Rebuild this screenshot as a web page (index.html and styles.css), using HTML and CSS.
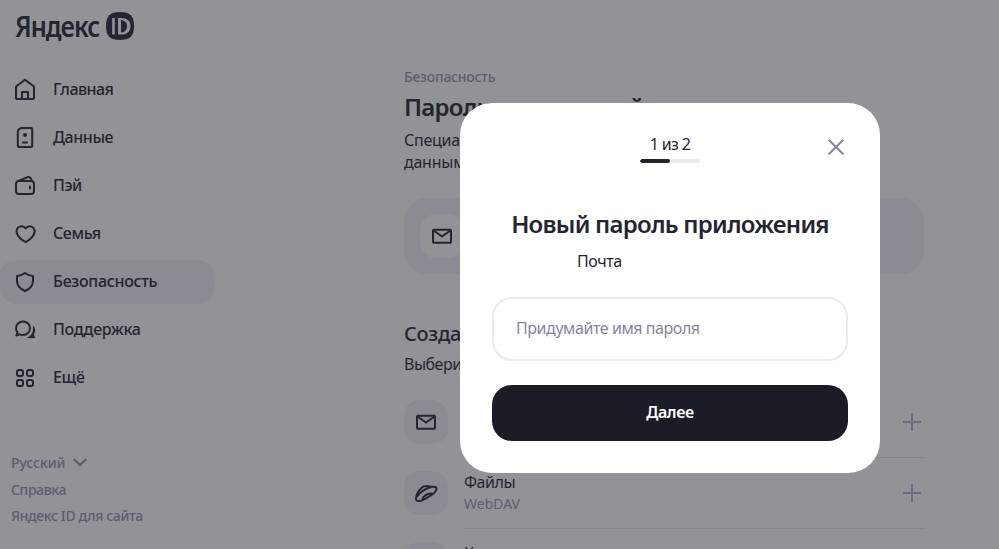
FILE: index.html
```html
<!DOCTYPE html>
<html lang="ru">
<head>
<meta charset="utf-8">
<title>Яндекс ID</title>
<link rel="stylesheet" href="styles.css">
</head>
<body>
<div class="page">
  <aside class="sidebar">
    <div class="logo"><span class="logo-text">Яндекс</span>
      <svg class="logo-id" width="28" height="28" viewBox="0 0 28 28"><path d="M14 0C24 0 28 4 28 14S24 28 14 28 0 24 0 14 4 0 14 0Z" fill="#252531"/><path d="M7.500 6V22.500" stroke="#929397" stroke-width="2.600"/><path d="M12 6h3.500c5.500 0 9 3 9 8.200s-3.500 8.300-9 8.300H12Z" fill="#929397"/><path d="M15 8c4 .4 6 2.600 6 6.200s-2 5.900-6 6.300Z" fill="#252531"/></svg>
    </div>
    <nav class="nav">
      <a class="item"><svg class="icon" viewBox="0 0 24 24"><path d="M3 9.500 12 2.700l9 6.800V21a1 1 0 0 1-1 1H4a1 1 0 0 1-1-1Z M9 22v-7h6v7"/></svg><span class="t-home">Главная</span></a>
      <a class="item"><svg class="icon" viewBox="0 0 24 24"><path d="M9 3h9a1.200 1.200 0 0 1 1.200 1.200v16.600A1.200 1.200 0 0 1 18 22H6a1.200 1.200 0 0 1-1.200-1.200V7Q5 3.300 9 3Z M10 17.500h4"/><circle cx="12" cy="10" r="2" class="solid"/></svg><span class="t-data">Данные</span></a>
      <a class="item"><svg class="icon" viewBox="0 0 24 24"><path d="M6 8h12a3 3 0 0 1 3 3v7a3 3 0 0 1-3 3H6a3 3 0 0 1-3-3v-7a3 3 0 0 1 3-3ZM4.300 8.400 14.500 4.300q2-.8 3.300 1l1.300 2.900M17 13.500v2"/></svg><span class="t-pay">Пэй</span></a>
      <a class="item"><svg class="icon" viewBox="0 -1.300 24 24"><path d="M12.600 6C10.500 3.200 7 3.300 5.100 5.300 3 7.500 3.300 11 5.500 14c1.700 2.300 4.400 4.300 7.100 5.800 2.700-1.500 5.400-3.500 7.100-5.800 2.200-3 2.500-6.500.4-8.700-1.900-2-5.400-2.100-7.500.7Z"/></svg><span class="t-family">Семья</span></a>
      <a class="item active"><svg class="icon" viewBox="0 -1 24 24"><path d="M12 3C9.800 4.700 7 5.700 4 6v4.500c0 5 3.200 8.700 8 10.500 4.800-1.800 8-5.500 8-10.500V6c-3-.3-5.800-1.300-8-3Z"/></svg><span class="t-security">Безопасность</span></a>
      <a class="item"><svg class="icon" viewBox="0 0 24 24"><path d="M10 4.500c4.100 0 7 2.900 7 6.700S14.100 18 10 18c-1.200 0-2.300-.2-3.300-.7L3.300 18.500l1.200-3.100A6.800 6.800 0 0 1 3 11.200c0-3.800 2.900-6.700 7-6.700Z"/><path d="M20 8.500c2.600 2.500 2.800 6.100.9 8.800l1.300 3.800c-3 .1-6.200.2-8.700-.6 4-.8 7.200-3.900 6.500-12Z" class="solid"/></svg><span class="t-support">Поддержка</span></a>
      <a class="item"><svg class="icon" viewBox="0 -1 24 24"><rect x="4" y="4" width="6" height="6" rx="2"/><rect x="14" y="4" width="6" height="6" rx="2"/><rect x="4" y="14" width="6" height="6" rx="2"/><rect x="14" y="14" width="6" height="6" rx="2"/></svg><span class="t-more">Ещё</span></a>
    </nav>
    <footer class="links">
      <a class="lang"><span class="t-lang">Русский</span><svg width="14" height="9" viewBox="0 0 14 9" fill="none" stroke="#5d5c70" stroke-width="2"><path d="m.8 1 6.200 6.300L13.200 1"/></svg></a>
      <a class="t-help">Справка</a>
      <a class="t-site">Яндекс ID для сайта</a>
    </footer>
  </aside>
  <main class="main">
    <div class="crumb">Безопасность</div>
    <h1>Пароли приложений</h1>
    <p class="intro">Специал<br>данным</p>
    <div class="banner"><div class="tile plain"><svg class="icon" viewBox="0 0 24 24"><rect x="3" y="5.700" width="18" height="13" rx="1"/><path d="m3.500 6.500 8.500 6 8.500-6"/></svg></div></div>
    <h2>Создать</h2>
    <p class="choose">Выберите</p>
    <div class="row"><div class="tile"><svg class="icon" viewBox="0 0 24 24"><rect x="3" y="5.700" width="18" height="13" rx="1"/><path d="m3.500 6.500 8.500 6 8.500-6"/></svg></div><div class="content"><div></div><svg class="plus" viewBox="0 0 18 18"><path d="M9 0v18M0 9h18"/></svg></div></div>
    <div class="row"><div class="tile"><svg class="icon" viewBox="0 0 24 24"><path d="M2.500 19.500C.8 17 4 9.500 8 6.500c2-1.500 4.500-1.800 7.500-1 3 .8 6.500-.3 7 1.500.6 3.300-5 7.500-10.500 10.300-3.500 1.900-7.700 3.700-9.500 2.200ZM3.500 15C6 11 11.500 7.800 17 6M9 18.500c-1-1 1-3.500 4-5 2.800-1.400 5.500-1.500 5-.2"/></svg></div><div class="content"><div><div class="name">Файлы</div><div class="sub">WebDAV</div></div><svg class="plus" viewBox="0 0 18 18"><path d="M9 0v18M0 9h18"/></svg></div></div>
    <div class="row"><div class="tile"></div><div class="content"><div class="name">К</div></div></div>
  </main>
</div>
<section class="modal" role="dialog">
  <header class="modal-head"><div class="step"><span class="step-text">1 из 2</span><div class="progress"><div class="done"></div></div></div>
    <svg class="close" viewBox="0 0 16 16"><path d="m.7.7 14.600 14.600M15.300.7.7 15.300"/></svg></header>
  <div class="modal-title"><span class="t-title">Новый пароль приложения</span></div>
  <div class="mail">Почта</div>
  <div class="input"><span>Придумайте имя пароля</span></div>
  <div class="button"><span>Далее</span></div>
</section>
</body>
</html>
```
FILE: styles.css
```css
* { box-sizing: border-box; }
body { margin: 0; height: 549px; overflow: hidden; background: #929397; color: #252531; font: 16px/20px "Noto Sans", "Open Sans", sans-serif; }
h1, h2, p { margin: 0; }
.page { display: flex; height: 549px; overflow: hidden; }
.sidebar { width: 214px; flex: none; }
.logo { display: flex; align-items: center; gap: 6px; height: 52px; padding-left: 15px; }
.logo-text { width: 85px; font-size: 29px; line-height: 30px; font-weight: 600; letter-spacing: -1.2px; white-space: nowrap; transform: scaleX(.87); transform-origin: left; }
.logo-id { flex: none; }
.nav { display: flex; flex-direction: column; gap: 4px; padding-top: 16px; }
.item { display: flex; align-items: center; gap: 16px; height: 44px; padding: 0 0 2px 13px; font-weight: 500; border-radius: 0 16px 16px 0; white-space: nowrap; }
.active { background: #8b8b94; border-radius: 16px; }
.icon { width: 24px; height: 24px; flex: none; fill: none; stroke: #252531; stroke-width: 2; stroke-linejoin: round; stroke-linecap: round; }
.icon .solid { fill: #252531; stroke: none; }
.t-home { letter-spacing: -.55px; }
.t-data, .t-pay, .t-family { letter-spacing: -.4px; }
.t-security, .t-support, .t-more { letter-spacing: -.3px; }
.links { display: flex; flex-direction: column; gap: 6px; padding: 52px 0 0 11px; color: #5d5c70; font-size: 14px; font-weight: 500; white-space: nowrap; }
.lang { display: flex; align-items: center; gap: 8px; height: 22px; padding-bottom: 1px; }
.t-lang { letter-spacing: -.1px; }
.t-help, .t-site { letter-spacing: -.38px; }
.main { width: 520px; margin-left: 190px; padding-top: 67px; white-space: nowrap; }
.crumb { color: #5d5c70; font-size: 14px; font-weight: 500; letter-spacing: -.25px; }
h1 { margin-top: 5px; font-size: 24px; line-height: 30px; font-weight: 600; letter-spacing: -.75px; }
.intro { margin-top: 7px; line-height: 22px; letter-spacing: -.25px; }
.banner { height: 76px; margin-top: 25px; padding: 16px; border-radius: 24px; background: #8b8b94; }
.tile { display: flex; align-items: center; justify-content: center; width: 44px; height: 44px; flex: none; border-radius: 16px; background: #8b8b94; }
.plain { background: #929397; }
h2 { margin-top: 48px; font-size: 20px; line-height: 24px; font-weight: 500; letter-spacing: -.3px; }
.choose { margin-top: 8px; letter-spacing: -.5px; }
.row { display: flex; gap: 16px; height: 71px; }
.choose + .row { margin-top: 26px; }
.content { display: flex; flex: 1; height: 58px; align-items: flex-start; justify-content: space-between; border-bottom: 1px solid #858590; }
.name { line-height: 22px; letter-spacing: -.45px; }
.sub { color: #5d5c70; font-size: 14px; line-height: 22px; }
.plus { width: 18px; height: 18px; margin: 13px 3px 0 0; fill: none; stroke: #6b6c82; stroke-width: 2; }
.modal { position: absolute; left: 460px; top: 103px; width: 420px; height: 370px; padding: 31px 32px 32px; border-radius: 32px; background: #fff; text-align: center; }
.modal-head { display: grid; grid-template-columns: 1fr 60px 1fr; }
.step { grid-column: 2; }
.step-text { display: block; letter-spacing: -.65px; }
.progress { height: 4px; margin-top: 5px; border-radius: 2px; background: #e9e9f0; overflow: hidden; }
.done { width: 50%; height: 4px; border-radius: 2px; background: #252531; }
.close { width: 16px; height: 16px; margin: 5px 4px 0 auto; fill: none; stroke: #8586a0; stroke-width: 2; }
.modal-title { margin-top: 46px; font-size: 24px; line-height: 30px; font-weight: 600; letter-spacing: -.75px; white-space: nowrap; }
.mail { margin: 12px 0 0 85px; text-align: left; letter-spacing: -.4px; }
.input { display: flex; align-items: center; height: 64px; margin-top: 26px; padding: 0 22px 2px; border: 2px solid #eaeaef; border-radius: 20px; color: #8586a0; letter-spacing: -.43px; }
.button { height: 56px; margin-top: 24px; padding-top: 17px; border-radius: 20px; background: #1c1c26; color: #fff; font-weight: 600; letter-spacing: -.4px; }
```
